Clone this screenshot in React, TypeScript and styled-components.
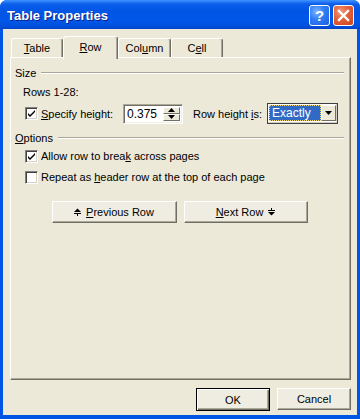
import styled, { createGlobalStyle } from "styled-components";

const GlobalStyle = createGlobalStyle`
  html, body {
    margin: 0;
    padding: 0;
    background: #ffffff;
  }
  body {
    font-family: "Liberation Sans", Arial, sans-serif;
    font-size: 11px;
    color: #000000;
  }
  * {
    box-sizing: border-box;
  }
`;

const Window = styled.div`
  width: 360px;
  height: 419px;
  display: flex;
  flex-direction: column;
  border-radius: 7px 7px 0 0;
  overflow: hidden;
  background: #0055e5;
`;

const TitleBar = styled.div`
  height: 29px;
  flex: none;
  display: flex;
  align-items: center;
  gap: 3px;
  padding: 1px 6px 0 7px;
  background: linear-gradient(
    to bottom,
    #3d95ff 0%,
    #2a7cf8 6%,
    #0a5ee8 14%,
    #0055e5 40%,
    #0057e8 70%,
    #0050dc 90%,
    #0343c9 100%
  );
`;

const Title = styled.div`
  flex: 1;
  color: #ffffff;
  font-weight: bold;
  font-size: 13px;
  text-shadow: 1px 1px 0 #0a1e8a;
`;

const CaptionButton = styled.div<{ $kind: "help" | "close" }>`
  width: 21px;
  height: 21px;
  border: 1px solid #ffffff;
  border-radius: 3px;
  display: flex;
  align-items: center;
  justify-content: center;
  color: #ffffff;
  font-weight: bold;
  font-size: 15px;
  background: ${(p) =>
    p.$kind === "close"
      ? "radial-gradient(circle at 35% 30%, #f29a7a 0%, #e2603a 45%, #cc4318 100%)"
      : "radial-gradient(circle at 35% 30%, #7db3ff 0%, #2f7cf5 45%, #1b5fe0 100%)"};
`;

const Body = styled.div`
  flex: 1;
  display: flex;
  flex-direction: column;
  margin: 0 3px 4px 3px;
  padding: 7px 6px 0 7px;
  background: #ece9d8;
`;

const TabStrip = styled.div`
  height: 21px;
  flex: none;
  display: flex;
  align-items: flex-start;
  padding-left: 1px;
`;

const Tab = styled.div<{ $width: number; $active?: boolean }>`
  width: ${(p) => p.$width}px;
  height: ${(p) => (p.$active ? 23 : 19)}px;
  margin-top: ${(p) => (p.$active ? 0 : 2)}px;
  display: flex;
  align-items: center;
  justify-content: center;
  padding-bottom: ${(p) => (p.$active ? 2 : 0)}px;
  background: #ece9d8;
  border-top: 1px solid #ffffff;
  border-left: 1px solid #ffffff;
  border-right: 1px solid #716f64;
  box-shadow: inset -1px 0 0 #aca899;
  border-radius: 3px 3px 0 0;
  z-index: ${(p) => (p.$active ? 1 : 0)};
`;

const Panel = styled.div`
  flex: 1;
  display: flex;
  flex-direction: column;
  padding: 8px 6px 0 4px;
  border-top: 1px solid #ffffff;
  border-left: 1px solid #ffffff;
  border-right: 1px solid #716f64;
  border-bottom: 1px solid #716f64;
  box-shadow: inset -1px -1px 0 #aca899;
`;

const GroupHeader = styled.div<{ $top?: number }>`
  height: 14px;
  margin-top: ${(p) => p.$top ?? 0}px;
  display: flex;
  align-items: center;
  gap: 5px;
  &::after {
    content: "";
    flex: 1;
    height: 0;
    border-top: 1px solid #aca899;
    border-bottom: 1px solid #ffffff;
  }
`;

const Line = styled.div<{ $top: number; $indent: number; $height?: number }>`
  height: ${(p) => p.$height ?? 14}px;
  margin-top: ${(p) => p.$top}px;
  margin-left: ${(p) => p.$indent}px;
  display: flex;
  align-items: center;
  white-space: nowrap;
`;

const HeightRow = styled.div`
  height: 20px;
  margin-top: 4px;
  margin-left: 10px;
  display: grid;
  grid-template-columns: 16px 82px 60px 84px 71px;
  align-items: center;
  white-space: nowrap;
`;

const Box = styled.div`
  width: 13px;
  height: 13px;
  flex: none;
  margin-right: 3px;
  background: #ffffff;
  border-top: 1px solid #808080;
  border-left: 1px solid #808080;
  border-right: 1px solid #ffffff;
  border-bottom: 1px solid #ffffff;
  box-shadow: inset 1px 1px 0 #404040, inset -1px -1px 0 #d4d0c8;
  display: flex;
  align-items: center;
  justify-content: center;
`;

const U = styled.span`
  text-decoration: underline;
  text-underline-offset: 1px;
`;

const SpinField = styled.div`
  height: 20px;
  display: flex;
  align-items: stretch;
  background: #ffffff;
  border-top: 1px solid #aca899;
  border-left: 1px solid #aca899;
  border-right: 1px solid #ffffff;
  border-bottom: 1px solid #ffffff;
  box-shadow: inset 1px 1px 0 #716f64, inset -1px -1px 0 #f1efe2;
  padding: 2px 2px 2px 3px;
`;

const SpinText = styled.div`
  flex: 1;
  display: flex;
  align-items: center;
  font-size: 12px;
`;

const SpinButtons = styled.div`
  width: 17px;
  display: flex;
  flex-direction: column;
`;

const SpinButton = styled.div`
  flex: 1;
  display: flex;
  align-items: center;
  justify-content: center;
  background: #ece9d8;
  border-top: 1px solid #ffffff;
  border-left: 1px solid #ffffff;
  border-right: 1px solid #716f64;
  border-bottom: 1px solid #716f64;
`;

const RowLabel = styled.div`
  padding-left: 10px;
`;

const Select = styled.div`
  height: 21px;
  display: flex;
  align-items: stretch;
  background: #ffffff;
  border: 1px solid #404040;
  box-shadow: inset -1px -1px 0 #d4d0c8;
  padding: 1px 1px 2px 1px;
`;

const SelectValue = styled.div`
  flex: 1;
  display: flex;
  align-items: center;
  padding-left: 3px;
  background: #316ac5;
  color: #ffffff;
  outline: 1px dotted #f5d77a;
  outline-offset: -1px;
  font-size: 12px;
`;

const DropButton = styled.div`
  width: 15px;
  display: flex;
  align-items: center;
  justify-content: center;
  background: #ece9d8;
  border-top: 1px solid #ffffff;
  border-left: 1px solid #ffffff;
  border-right: 1px solid #716f64;
  border-bottom: 1px solid #716f64;
`;

const NavRow = styled.div`
  margin-top: 17px;
  display: flex;
  justify-content: center;
  gap: 7px;
`;

const Button = styled.div<{ $width: number; $default?: boolean }>`
  width: ${(p) => p.$width}px;
  height: ${(p) => (p.$default ? 23 : 22)}px;
  display: flex;
  align-items: center;
  justify-content: center;
  gap: 5px;
  background: #efede2;
  border: 1px solid ${(p) => (p.$default ? "#000000" : "transparent")};
  box-shadow: ${(p) =>
    p.$default
      ? "inset 1px 1px 0 #ffffff, inset -1px -1px 0 #716f64, inset -2px -2px 0 #aca899"
      : "inset 0 0 0 0 transparent"};
  ${(p) =>
    p.$default
      ? ""
      : `border-color: #ffffff #716f64 #716f64 #ffffff;
         box-shadow: inset -1px -1px 0 #aca899;`}
`;

const Footer = styled.div`
  height: 35px;
  flex: none;
  display: flex;
  justify-content: flex-end;
  align-items: flex-start;
  gap: 7px;
  padding-top: 8px;
`;

const Check = () => (
  <svg width="9" height="9" viewBox="0 0 9 9">
    <path d="M1 4 L3 6 L8 1 L8 3 L3 8 L1 6 Z" fill="#000" />
  </svg>
);

const TriangleUp = () => (
  <svg width="7" height="4" viewBox="0 0 7 4">
    <path d="M0 4 L3.5 0 L7 4 Z" fill="#000" />
  </svg>
);

const TriangleDown = ({ w = 7 }: { w?: number }) => (
  <svg width={w} height={w / 2 + 0.5} viewBox="0 0 7 4">
    <path d="M0 0 L7 0 L3.5 4 Z" fill="#000" />
  </svg>
);

const PrevIcon = () => (
  <svg width="7" height="8" viewBox="0 0 7 8">
    <path d="M0 4 L3.5 0.5 L7 4 Z" fill="#000" />
    <rect x="0" y="5" width="7" height="1" fill="#000" />
    <rect x="3" y="6" width="1" height="2" fill="#000" />
  </svg>
);

const NextIcon = () => (
  <svg width="7" height="8" viewBox="0 0 7 8">
    <rect x="3" y="0" width="1" height="2" fill="#000" />
    <rect x="0" y="2" width="7" height="1" fill="#000" />
    <path d="M0 4 L7 4 L3.5 7.5 Z" fill="#000" />
  </svg>
);

const CloseX = () => (
  <svg width="13" height="13" viewBox="0 0 13 13">
    <path d="M2 2 L11 11 M11 2 L2 11" stroke="#fff" strokeWidth="2.4" strokeLinecap="square" />
  </svg>
);

export default function App() {
  return (
    <>
      <GlobalStyle />
      <Window>
        <TitleBar>
          <Title>Table Properties</Title>
          <CaptionButton $kind="help">?</CaptionButton>
          <CaptionButton $kind="close">
            <CloseX />
          </CaptionButton>
        </TitleBar>
        <Body>
          <TabStrip>
            <Tab $width={52}>
              <span>
                <U>T</U>able
              </span>
            </Tab>
            <Tab $width={55} $active>
              <span>
                <U>R</U>ow
              </span>
            </Tab>
            <Tab $width={53}>
              <span>
                Col<U>u</U>mn
              </span>
            </Tab>
            <Tab $width={52}>
              <span>
                C<U>e</U>ll
              </span>
            </Tab>
          </TabStrip>
          <Panel>
            <GroupHeader>Size</GroupHeader>
            <Line $top={5} $indent={8}>
              Rows 1-28:
            </Line>
            <HeightRow>
              <Box>
                <Check />
              </Box>
              <span>
                <U>S</U>pecify height:
              </span>
              <SpinField>
                <SpinText>0.375</SpinText>
                <SpinButtons>
                  <SpinButton>
                    <TriangleUp />
                  </SpinButton>
                  <SpinButton>
                    <TriangleDown />
                  </SpinButton>
                </SpinButtons>
              </SpinField>
              <RowLabel>
                Row height <U>i</U>s:
              </RowLabel>
              <Select>
                <SelectValue>Exactly</SelectValue>
                <DropButton>
                  <TriangleDown />
                </DropButton>
              </Select>
            </HeightRow>
            <GroupHeader $top={8}>
              <span>
                <U>O</U>ptions
              </span>
            </GroupHeader>
            <Line $top={4} $indent={10}>
              <Box>
                <Check />
              </Box>
              <span>
                Allow row to brea<U>k</U> across pages
              </span>
            </Line>
            <Line $top={7} $indent={10}>
              <Box />
              <span>
                Repeat as <U>h</U>eader row at the top of each page
              </span>
            </Line>
            <NavRow>
              <Button $width={125}>
                <PrevIcon />
                <span>
                  <U>P</U>revious Row
                </span>
              </Button>
              <Button $width={124}>
                <span>
                  <U>N</U>ext Row
                </span>
                <NextIcon />
              </Button>
            </NavRow>
          </Panel>
          <Footer>
            <Button $width={74} $default>
              OK
            </Button>
            <Button $width={74}>Cancel</Button>
          </Footer>
        </Body>
      </Window>
    </>
  );
}
